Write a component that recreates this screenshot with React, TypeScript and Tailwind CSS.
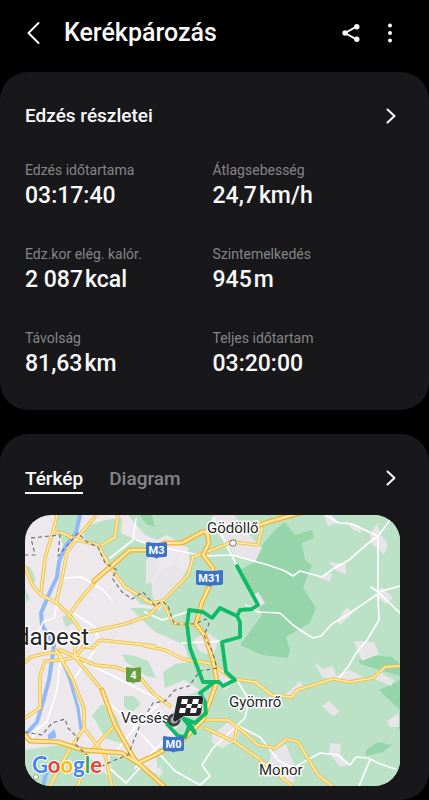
import { useState } from "react";

const stats = [
  { label: "Edzés időtartama", value: "03:17:40", unit: "" },
  { label: "Átlagsebesség", value: "24,7", unit: "km/h" },
  { label: "Edz.kor elég. kalór.", value: "2 087", unit: "kcal" },
  { label: "Szintemelkedés", value: "945", unit: "m" },
  { label: "Távolság", value: "81,63", unit: "km" },
  { label: "Teljes időtartam", value: "03:20:00", unit: "" },
];

const tabs = ["Térkép", "Diagram"];

const greenAreas = [
  "M57 515H81L77 530L64 546L56 530Z",
  "M84 527L105 520L122 518L121 533L147 545L152 590L155 606L140 604L124 584L110 570L98 547L84 538Z",
  "M128 515H400V786H25V750L60 745L84 752L112 780L110 755L132 760L158 775L156 750L185 738L168 728L178 700L200 690L184 680L165 688L163 672L175 664L190 662L184 645L165 636L155 632L130 608L142 608L160 610L176 583L190 566L188 548L167 535L157 540L145 535Z",
  "M25 567H30L36 579L33 585Z",
  "M25 588L30 599L26 602Z",
  "M62 617L70 614L75 622L66 627Z",
  "M122 654L135 656L148 661L156 678L146 676L126 662Z",
  "M124 696L134 696L141 704L131 713L124 706Z",
  "M92 715L102 704L117 717L126 745L105 738Z",
];

const darkAreas = [
  "M285 522L295 535L312 530L314 538L302 543L305 560L312 565L308 575L303 588L316 608L310 623L286 637L290 650L288 658L262 655L240 645L262 615L258 605L240 570L255 562L262 545L275 530Z",
  "M140 515H152L155 527L146 524Z",
  "M359 660L372 655L392 657L400 664V676L380 670L360 664Z",
  "M379 690L400 680V732L396 724L400 710Z",
  "M366 750L378 742L392 745L383 752L366 756Z",
];

const towns = [
  "M213 515H235L240 525L262 548L255 562L235 556L224 540L215 532Z",
  "M146 560L155 555L166 536L170 550L160 562L155 578L146 585Z",
  "M157 572L175 564L185 574L176 588L160 600L152 596Z",
  "M251 597L258 592L265 603L257 609Z",
  "M193 640L207 632L218 640L214 655L200 652Z",
  "M213 667L226 670L236 680L226 690L214 682Z",
  "M324 515H332L337 523L328 526Z",
  "M345 521L360 526L361 533L352 529Z",
  "M370 535L377 523L381 535L388 545L384 554L371 543Z",
  "M329 562L346 564L346 574L337 571Z",
  "M318 577L332 573L330 582Z",
  "M337 621L347 607L353 613L340 625Z",
  "M375 595L382 587L393 598L386 604Z",
  "M354 641L374 642L379 654L362 661Z",
  "M355 645L373 645L378 654L366 653Z",
  "M314 662L323 669L333 666L336 676L350 670L363 677L340 682L322 677Z",
  "M373 678L377 671L394 680L391 686Z",
  "M285 695L300 681L304 688L292 698Z",
  "M322 706L329 701L340 712L333 716Z",
  "M387 721L399 713V727L390 727Z",
  "M330 743L341 744L340 754L348 765L341 767L329 754Z",
  "M272 752L286 744L294 764V783L282 780L268 764Z",
  "M212 735L228 722L240 727L237 740L222 748L212 742Z",
  "M156 770L161 766L163 773L158 778Z",
];

const whiteRoads = [
  "M57 603L54 618L43 622L35 640",
  "M61 578L82 577L103 590L112 600",
  "M110 558L133 540L136 519",
  "M136 540L155 546L184 552L205 556L232 555L268 565L285 571L293 576L300 571L322 577L333 569L349 560L366 545L378 536L390 520",
  "M213 518L237 566",
  "M326 515L339 523L352 524L378 536V592L400 586",
  "M371 587L378 592L400 613",
  "M376 595L350 613L332 624L321 636L313 638L300 630L293 625L280 613L258 612L246 605",
  "M378 595L379 620L367 640L356 653L348 667L339 678",
  "M145 612L162 620L187 612",
  "M182 643L207 642L222 641",
  "M72 612L95 627L99 641L95 650L73 680",
  "M92 666L115 677L156 698",
  "M60 662L57 690L52 706L47 722L35 731L30 745",
  "M106 700L132 724L175 771L200 785L210 776L202 765L213 748L245 718L249 700L237 680",
  "M158 705L142 718L119 748",
  "M135 768L155 750L178 725",
  "M105 764L126 783L145 762",
  "M229 721L260 737L278 760L293 768L320 753L338 755L350 765L356 757L368 758L378 763L395 769",
  "M370 760L359 786",
];

const yellowRoads = [
  "M57 515L53 532L45 558L41 594",
  "M25 567L33 586L41 595L57 603L72 618L84 635L75 647L75 657L102 690",
  "M53 532L62 533L77 540L98 545L110 567L125 587L155 605",
  "M95 517L82 532L67 552L62 578L56 603",
  "M118 515L115 537L102 545",
  "M95 582L78 602L68 617",
  "M84 633L125 624L148 616L162 602L188 575L193 557L212 550L232 542L258 545L262 528",
  "M145 600L152 603L162 601L173 623L195 625",
  "M25 662L31 657L47 653L58 653L63 660L75 657L84 646L93 648L100 640L155 646",
  "M63 660L45 661L40 675V708L25 718",
  "M56 650L72 678L84 708V728L68 752L50 786",
  "M84 728L105 755L112 786",
  "M60 650L95 665L115 667L138 675L154 694L170 706",
  "M84 752L92 750L115 725",
  "M88 755L78 786",
  "M145 646L165 650L183 659L212 664L233 679L255 682L272 695L292 697L297 690L333 679L350 682L373 678L385 667L400 666",
  "M201 720H228L245 733L258 745L275 748L287 739L298 742L318 775L332 786",
  "M205 728L235 742L258 758L292 786",
  "M237 727L234 742",
];

const motorways = [
  "M94 581L130 550L147 550L165 543H182L202 532L245 530L268 522L300 513",
  "M207 532L209 543L203 555L213 568L210 585L202 602L196 624L205 636L213 660L217 682L213 693L203 720L185 738L155 755L138 763L122 753L83 750L58 742L30 741L24 734",
  "M102 690L115 725L135 760L166 788",
];

const borders = [
  "M25 555H35L31 538L60 535L58 556L78 533L87 542L98 547L105 563L117 570L112 578L122 592L132 599L143 592L155 606L162 601L168 606L174 624H195L206 619L209 624L204 635L212 651L217 668L200 671L189 686L175 690L165 701L153 703L140 725L128 755L115 760L100 767",
  "M25 732L42 735L52 723L65 719L68 728L78 738L76 745L87 755",
];

const mapLabel = {
  fontFamily: "Roboto, sans-serif",
  fill: "#26282b",
  stroke: "#fff",
  strokeWidth: 3,
  strokeLinejoin: "round" as const,
  paintOrder: "stroke" as const,
};

const Chevron = () => (
  <svg viewBox="0 0 10 16" className="h-4 w-[10px]" fill="none" stroke="currentColor" strokeWidth="2" strokeLinecap="round" strokeLinejoin="round">
    <path d="M1.5 1.5L8.5 8L1.5 14.5" />
  </svg>
);

const Shield = ({ x, y, width, label, green = false }: { x: number; y: number; width: number; label: string; green?: boolean }) => (
  <g transform={`translate(${x} ${y})`}>
    <path
      d={`M1 0Q${width / 2} 2 ${width - 1} 0L${width} 1V13Q${width} 15 ${width - 3} 15Q${width / 2} 15 ${width / 2} 17Q${width / 2} 15 3 15Q0 15 0 13V1Z`}
      fill={green ? "#669e3e" : "#3c73c6"}
    />
    <text x={width / 2} y="12" textAnchor="middle" fontSize="11" fontWeight="700" fill="#fff" fontFamily="Roboto, sans-serif">
      {label}
    </text>
  </g>
);

const RouteMap = () => (
  <svg viewBox="25 515 375 271" className="block w-full rounded-[26px]" role="img" aria-label="Útvonal térképe">
    <rect x="25" y="515" width="375" height="271" fill="#ece8ec" />
    {greenAreas.map((d) => (
      <path key={d} d={d} fill="#bbe2c6" />
    ))}
    {darkAreas.map((d) => (
      <path key={d} d={d} fill="#96d4aa" />
    ))}
    {towns.map((d) => (
      <path key={d} d={d} fill="#e8e5e9" />
    ))}

    {/* Danube */}
    <g fill="none" stroke="#92b9f7" strokeLinejoin="round">
      <path d="M80 515L76 533L65 547L59 562L57 577L50 592L41 613L42 625L54 645L52 660L49 680L43 702L37 722L27 733" strokeWidth="4" />
      <path d="M61 658L70 680L78 708L81 730" strokeWidth="3" />
      <path d="M48 735L54 730L56 737L49 739Z" fill="#92b9f7" />
      <path d="M47 770L43 786" strokeWidth="4" />
    </g>

    <g fill="none" strokeLinejoin="round" strokeLinecap="round">
      {whiteRoads.map((d) => (
        <path key={d} d={d} stroke="#fff" strokeWidth="1.7" />
      ))}
      {yellowRoads.map((d) => (
        <path key={d} d={d} stroke="#efc250" strokeWidth="3.6" />
      ))}
      {yellowRoads.map((d) => (
        <path key={d} d={d} stroke="#fdecab" strokeWidth="1.6" />
      ))}
      {motorways.map((d) => (
        <path key={d} d={d} stroke="#f5b130" strokeWidth="5" />
      ))}
      {motorways.map((d) => (
        <path key={d} d={d} stroke="#fee8a0" strokeWidth="2.4" />
      ))}
      {borders.map((d) => (
        <path key={d} d={d} stroke="#6a7378" strokeWidth="1.2" strokeDasharray="3 4" />
      ))}
    </g>

    {/* Place names */}
    <g {...mapLabel}>
      <circle cx="233" cy="543" r="2.8" fill="#fff" stroke="#4a4d50" strokeWidth="1.3" />
      <circle cx="36" cy="777" r="2" fill="#fff" stroke="#4a4d50" strokeWidth="1" />
      <text x="207" y="533" fontSize="15">Gödöllő</text>
      <text x="89" y="645" fontSize="24" textAnchor="end">Budapest</text>
      <text x="121" y="723" fontSize="15">Vecsés</text>
      <text x="229" y="707" fontSize="15">Gyömrő</text>
      <text x="259" y="775" fontSize="15">Monor</text>
    </g>

    {/* Recorded route */}
    <g fill="none" stroke="#10ba68" strokeWidth="3.8" strokeLinejoin="round" strokeLinecap="round">
      <path d="M237 566L258 605L252 609L240 610L237 616L220 608L212 618L203 612L189 610L187 625L190 648L203 682L219 682L223 686L235 680L226 672L222 642L240 637V622L237 616" />
      <path d="M212 684L200 693L205 702L206 713L195 723L183 718L195 733L190 724L185 737L178 736L167 724" />
    </g>

    <Shield x={146} y={542} width={21} label="M3" />
    <Shield x={196} y={570} width={27} label="M31" />
    <Shield x={163} y={736} width={21} label="M0" />
    <Shield x={126} y={667} width={15} label="4" green />

    {/* Finish marker */}
    <circle cx="174" cy="720" r="5" fill="#a5a8a8" stroke="#3e4143" strokeWidth="3" />
    <path
      d="M180 696H200Q204 696 203 700L201 713Q200 716 197 716H184L175 722L173 720L177 700Q177 696 180 696Z"
      fill="#242526"
      stroke="#f4f4f4"
      strokeWidth="1"
      paintOrder="stroke"
    />
    <path d="M182 699H188L187 704H181ZM193 699H199L198 704H192ZM187 704H192L191 708H186ZM198 704H202L201 708H197ZM180 708H186L185 713H179ZM191 708H197L196 713H190Z" fill="#fff" />

    <text x="32" y="773" fontSize="22" fontWeight="700" fontFamily="Lato, sans-serif" stroke="#fff" strokeWidth="2" paintOrder="stroke">
      <tspan fill="#4285f4">G</tspan>
      <tspan fill="#ea4335">o</tspan>
      <tspan fill="#fbbc05">o</tspan>
      <tspan fill="#4285f4">g</tspan>
      <tspan fill="#34a853">l</tspan>
      <tspan fill="#ea4335">e</tspan>
    </text>
  </svg>
);

const App = () => {
  const [activeTab, setActiveTab] = useState("Térkép");

  return (
    <div className="min-h-screen w-full bg-black font-['Roboto',sans-serif] text-[#fafafa]">
      <header className="flex h-[72px] items-center pb-[6px] pl-[26px] pr-9">
        <button aria-label="Vissza" className="mr-6">
          <svg viewBox="0 0 14 24" className="h-6 w-[14px]" fill="none" stroke="currentColor" strokeWidth="2" strokeLinecap="round" strokeLinejoin="round">
            <path d="M12.5 2L2.5 12L12.5 22" />
          </svg>
        </button>
        <h1 className="flex-1 text-[25px] font-medium leading-8">Kerékpározás</h1>
        <button aria-label="Megosztás" className="mr-[27px]">
          <svg viewBox="0 0 20 20" className="size-[18px]" fill="currentColor">
            <path d="M16 3L3.5 10L16 17" fill="none" stroke="currentColor" strokeWidth="2.2" />
            <circle cx="16.4" cy="3" r="3" />
            <circle cx="3.4" cy="10" r="3" />
            <circle cx="16.4" cy="17" r="3" />
          </svg>
        </button>
        <button aria-label="További lehetőségek">
          <svg viewBox="0 0 6 20" className="h-5 w-[6px]" fill="currentColor">
            <circle cx="3" cy="2.5" r="2" />
            <circle cx="3" cy="10" r="2" />
            <circle cx="3" cy="17.5" r="2" />
          </svg>
        </button>
      </header>

      <main className="flex flex-col gap-6">
        {/* Workout details */}
        <section className="rounded-[28px] bg-[#18181a] px-[25px] pb-[30px] pt-8">
          <div className="flex items-center justify-between pr-2">
            <h2 className="text-[19px] font-medium leading-6">Edzés részletei</h2>
            <button aria-label="Edzés részletei">
              <Chevron />
            </button>
          </div>
          <dl className="mt-8 grid grid-cols-2 gap-y-8 pr-1">
            {stats.map((stat) => (
              <div key={stat.label}>
                <dt className="text-sm leading-5 text-[#858587]">{stat.label}</dt>
                <dd className="flex gap-[2px] text-[23px] font-medium leading-8">
                  <span>{stat.value}</span>
                  {stat.unit && <span>{stat.unit}</span>}
                </dd>
              </div>
            ))}
          </dl>
        </section>

        {/* Map */}
        <section className="rounded-[28px] bg-[#18181a] px-[25px] pb-[14px] pt-8">
          <div className="mb-[21px] flex items-center justify-between pr-2">
            <div role="tablist" className="flex gap-[26px]">
              {tabs.map((tab) => (
                <button
                  key={tab}
                  role="tab"
                  aria-selected={activeTab === tab}
                  onClick={() => setActiveTab(tab)}
                  className={
                    activeTab === tab
                      ? "border-b-2 border-[#fafafa] text-[19px] font-medium leading-[26px]"
                      : "border-b-2 border-transparent text-[19px] font-medium leading-[26px] text-[#858587]"
                  }
                >
                  {tab}
                </button>
              ))}
            </div>
            <button aria-label="Térkép megnyitása" className="pb-1">
              <Chevron />
            </button>
          </div>
          <div className="pr-1">
            <RouteMap />
          </div>
        </section>
      </main>
    </div>
  );
};

export default App;
